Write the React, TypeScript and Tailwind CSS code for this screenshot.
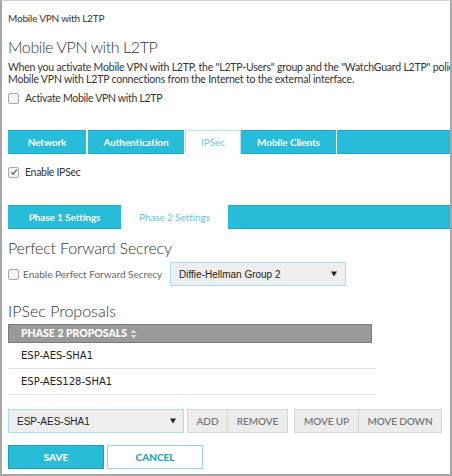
import React from "react";

const font = { fontFamily: 'Lato, "Open Sans", "Liberation Sans", sans-serif' };
const arial = { fontFamily: '"Liberation Sans", Arial, sans-serif' };

function Box({ checked = false }: { checked?: boolean }) {
  return (
    <span className="inline-flex h-[11px] w-[11px] shrink-0 items-center justify-center rounded-[2px] border border-[#a9a9a9] bg-[#f4f4f4]">
      {checked && (
        <svg width="8" height="8" viewBox="0 0 10 10">
          <path d="M1.5 5.2 L4 7.6 L8.6 2" fill="none" stroke="#707070" strokeWidth="1.8" />
        </svg>
      )}
    </span>
  );
}

function Caret() {
  return (
    <svg width="6" height="6" viewBox="0 0 7 7">
      <path d="M0 0.5 H7 L3.5 6.5 Z" fill="#222" />
    </svg>
  );
}

export default function App() {
  return (
    <div
      className="box-border h-[476px] w-[452px] overflow-hidden border-t border-r-2 border-b-2 border-l-2 border-t-[#d0d0d0] border-r-[#a6a6a6] border-b-[#a6a6a6] border-l-[#a6a6a6] bg-white text-[#333]"
      style={font}
    >
      <div className="pl-[6px]">
        <div className="pt-[10px] text-[10px] leading-[14px] tracking-[-0.2px] text-[#333]">Mobile VPN with L2TP</div>
        <div className="mt-[11px] text-[16px] font-light leading-[22px] tracking-[-0.4px] text-[#333]">Mobile VPN with L2TP</div>
        <div className="mt-[3px] whitespace-nowrap text-[10.5px] leading-[12px] tracking-[-0.2px] text-[#333]">
          <div>When you activate Mobile VPN with L2TP, the "L2TP-Users" group and the "WatchGuard L2TP" policy</div>
          <div>Mobile VPN with L2TP connections from the Internet to the external interface.</div>
        </div>
        <div className="mt-[6px] flex items-center gap-[6px] text-[10.5px] leading-[14px] tracking-[-0.3px]">
          <Box />
          <span>Activate Mobile VPN with L2TP</span>
        </div>

        {/* Main tabs */}
        <div className="mt-[25px] flex h-[24px] text-[10px] font-bold tracking-[-0.1px]">
          <div className="flex w-[78px] items-center justify-center border-y border-[#1ea9c3] bg-[#27bcd7] text-white">Network</div>
          <div className="ml-[2px] flex w-[96px] items-center justify-center border-y border-[#1ea9c3] bg-[#27bcd7] text-white">Authentication</div>
          <div className="ml-[1px] flex w-[56px] items-center justify-center border-t border-l border-r border-[#b6e4ee] bg-white font-normal text-[#67c7dc]">IPSec</div>
          <div className="flex w-[95px] items-center justify-center border-y border-[#1ea9c3] bg-[#27bcd7] text-white">Mobile Clients</div>
          <div className="ml-[1px] flex-1 border-y border-[#1ea9c3] bg-[#27bcd7]"></div>
        </div>

        <div className="mt-[11px] flex items-center gap-[6px] text-[10.5px] leading-[14px] tracking-[-0.3px]">
          <Box checked />
          <span>Enable IPSec</span>
        </div>

        {/* Phase tabs */}
        <div className="mt-[26px] flex h-[24px] text-[10px] font-bold tracking-[-0.1px]">
          <div className="flex w-[113px] items-center justify-center border-y border-[#1ea9c3] bg-[#27bcd7] text-white">Phase 1 Settings</div>
          <div className="ml-[1px] flex w-[105px] items-center justify-center bg-white font-normal text-[#67c7dc]">Phase 2 Settings</div>
          <div className="ml-[1px] flex-1 border-y border-[#1ea9c3] bg-[#27bcd7]"></div>
        </div>

        <div className="mt-[9px] text-[16px] font-light leading-[20px] tracking-[-0.2px]">Perfect Forward Secrecy</div>
        <div className="mt-[4px] flex h-[24px] items-center">
          <div className="flex w-[162px] items-center gap-[4px] text-[10px] leading-[14px] text-[#666]">
            <Box />
            <span>Enable Perfect Forward Secrecy</span>
          </div>
          <div
            className="flex h-[24px] w-[176px] items-center justify-between border border-[#a9e0eb] bg-[#eeeeee] pl-[8px] pr-[8px] text-[10px] text-[#222]"
            style={arial}
          >
            <span>Diffie-Hellman Group 2</span>
            <Caret />
          </div>
        </div>

        <div className="mt-[15px] text-[16px] font-light leading-[20px]">IPSec Proposals</div>
        <div className="mt-[3px] w-[364px]">
          <div className="flex h-[19px] items-center border border-[#7a7a7a] bg-[#9a9a9a] pl-[12px] text-[10.5px] font-black text-white">
            PHASE 2 PROPOSALS
            <svg className="ml-[3px]" width="7" height="10" viewBox="0 0 7 10">
              <path d="M0.5 4 L3.5 0.5 L6.5 4 Z M0.5 6 L3.5 9.5 L6.5 6 Z" fill="#d8d8d8" />
            </svg>
          </div>
        </div>
        <div className="w-[368px] text-[10px] text-[#222]" style={{ fontFamily: '"DejaVu Sans", Verdana, sans-serif' }}>
          <div className="flex h-[26px] items-center border-b border-[#e2e2e2] pl-[13px]">ESP-AES-SHA1</div>
          <div className="flex h-[26px] items-center border-b border-[#e2e2e2] pl-[13px]">ESP-AES128-SHA1</div>
        </div>

        <div className="mt-[14px] flex h-[24px] items-stretch">
          <div
            className="flex w-[176px] items-center justify-between border border-[#a9e0eb] bg-[#eeeeee] pl-[8px] pr-[7px] text-[10px] text-[#222]"
            style={arial}
          >
            <span>ESP-AES-SHA1</span>
            <Caret />
          </div>
          <div className="ml-[3px] flex w-[41px] items-center justify-center border border-[#d6d6d6] bg-[#ececec] text-[10px] font-semibold tracking-[-0.1px] text-[#777]">ADD</div>
          <div className="flex w-[60px] items-center justify-center border border-l-0 border-[#d6d6d6] bg-[#ececec] text-[10px] font-semibold tracking-[-0.1px] text-[#777]">REMOVE</div>
          <div className="ml-[6px] flex w-[65px] items-center justify-center border border-[#d6d6d6] bg-[#ececec] text-[10px] font-semibold tracking-[-0.1px] text-[#777]">MOVE UP</div>
          <div className="flex w-[83px] items-center justify-center border border-l-0 border-[#d6d6d6] bg-[#ececec] text-[10px] font-semibold tracking-[-0.1px] text-[#777]">MOVE DOWN</div>
        </div>

        <div className="mt-[12px] flex h-[24px] gap-[3px] text-[10px] font-black">
          <div className="flex w-[96px] items-center justify-center border border-[#1a9fb8] bg-[#29bcd6] text-white">SAVE</div>
          <div className="flex w-[96px] items-center justify-center border border-[#8fd8e6] bg-white text-[#23a3c3]">CANCEL</div>
        </div>
      </div>
    </div>
  );
}
